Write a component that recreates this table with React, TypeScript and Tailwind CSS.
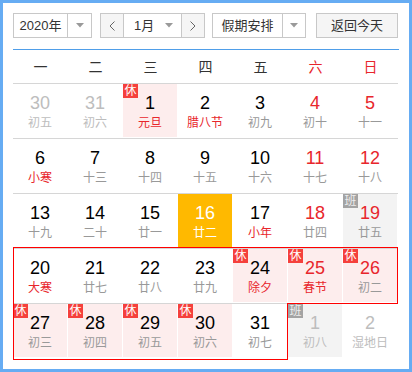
import React from "react";

type Cell = {
  d: number;
  l: string;
  dRed?: boolean;
  lRed?: boolean;
  other?: boolean;
  badge?: "休" | "班";
  bg?: "pink" | "gray" | "today";
};

const rows: Cell[][] = [
  [
    { d: 30, l: "初五", other: true },
    { d: 31, l: "初六", other: true },
    { d: 1, l: "元旦", lRed: true, badge: "休", bg: "pink" },
    { d: 2, l: "腊八节", lRed: true },
    { d: 3, l: "初九" },
    { d: 4, l: "初十", dRed: true },
    { d: 5, l: "十一", dRed: true },
  ],
  [
    { d: 6, l: "小寒", lRed: true },
    { d: 7, l: "十三" },
    { d: 8, l: "十四" },
    { d: 9, l: "十五" },
    { d: 10, l: "十六" },
    { d: 11, l: "十七", dRed: true },
    { d: 12, l: "十八", dRed: true },
  ],
  [
    { d: 13, l: "十九" },
    { d: 14, l: "二十" },
    { d: 15, l: "廿一" },
    { d: 16, l: "廿二", bg: "today" },
    { d: 17, l: "小年", lRed: true },
    { d: 18, l: "廿四", dRed: true },
    { d: 19, l: "廿五", dRed: true, badge: "班", bg: "gray" },
  ],
  [
    { d: 20, l: "大寒", lRed: true },
    { d: 21, l: "廿七" },
    { d: 22, l: "廿八" },
    { d: 23, l: "廿九" },
    { d: 24, l: "除夕", lRed: true, badge: "休", bg: "pink" },
    { d: 25, l: "春节", dRed: true, lRed: true, badge: "休", bg: "pink" },
    { d: 26, l: "初二", dRed: true, badge: "休", bg: "pink" },
  ],
  [
    { d: 27, l: "初三", badge: "休", bg: "pink" },
    { d: 28, l: "初四", badge: "休", bg: "pink" },
    { d: 29, l: "初五", badge: "休", bg: "pink" },
    { d: 30, l: "初六", badge: "休", bg: "pink" },
    { d: 31, l: "初七" },
    { d: 1, l: "初八", other: true, badge: "班", bg: "gray" },
    { d: 2, l: "湿地日", other: true },
  ],
];

const weekdays = ["一", "二", "三", "四", "五", "六", "日"];

function Caret() {
  return (
    <svg width="8" height="5" viewBox="0 0 8 5">
      <path d="M0 0 L8 0 L4 4.5 Z" fill="#9a9a9a" />
    </svg>
  );
}

function DayCell({ c }: { c: Cell }) {
  const bgClass =
    c.bg === "pink"
      ? "bg-[#fdeded]"
      : c.bg === "gray"
      ? "bg-[#f3f3f3]"
      : c.bg === "today"
      ? "bg-[#ffb900]"
      : "bg-white";
  let dColor = "text-black";
  let lColor = "text-[#999999]";
  if (c.other) {
    dColor = "text-[#bdbdbd]";
    lColor = "text-[#bdbdbd]";
  } else if (c.bg === "today") {
    dColor = "text-white";
    lColor = "text-white";
  } else {
    if (c.dRed) dColor = "text-[#e8262c]";
    if (c.lRed) lColor = "text-[#e8262c]";
  }
  return (
    <div className="h-[54px] w-[55px] pr-[1px] pb-[1px]">
      <div className={`relative flex h-full w-full flex-col items-center pt-[9px] ${bgClass}`}>
        {c.badge === "休" && (
          <span className="absolute left-0 top-0 flex h-[14px] w-[15px] items-center justify-center bg-[#f5403c] text-[12px] leading-[14px] text-white">
            休
          </span>
        )}
        {c.badge === "班" && (
          <span className="absolute left-0 top-0 flex h-[14px] w-[15px] items-center justify-center bg-[#a3a3a3] text-[12px] leading-[14px] text-[#eeeeee]">
            班
          </span>
        )}
        <span className={`text-[18px] leading-[20px] ${dColor}`}>{c.d}</span>
        <span className={`mt-[2px] text-[12px] leading-[16px] ${lColor}`}>{c.l}</span>
      </div>
    </div>
  );
}

export default function App() {
  return (
    <div
      className="h-[372px] w-[412px] border-[3px] border-[#66acf3] bg-white px-[10px] pt-[10px]"
      style={{ fontFamily: '"Liberation Sans", "Noto Sans CJK SC", sans-serif' }}
    >
      {/* header controls */}
      <div className="flex h-[25px] items-stretch text-[13px] text-[#333333]">
        <div className="flex w-[79px] border border-[#c8c8c8] bg-white">
          <div className="flex flex-1 items-center justify-center leading-none">2020年</div>
          <div className="flex w-[24px] items-center justify-center border-l border-[#c8c8c8]">
            <Caret />
          </div>
        </div>
        <div className="ml-[8px] flex w-[105px] border border-[#c8c8c8]">
          <div className="flex w-[22px] items-center justify-center bg-[#f5f5f5]">
            <svg width="6" height="10" viewBox="0 0 6 10">
              <path d="M5.5 0.5 L1 5 L5.5 9.5" fill="none" stroke="#666666" strokeWidth="1" />
            </svg>
          </div>
          <div className="flex flex-1 items-center border-l border-r border-[#c8c8c8] bg-white pl-[10px] pr-[8px]">
            <span className="flex-1 leading-none">1月</span>
            <Caret />
          </div>
          <div className="flex w-[22px] items-center justify-center bg-[#f5f5f5]">
            <svg width="6" height="10" viewBox="0 0 6 10">
              <path d="M0.5 0.5 L5 5 L0.5 9.5" fill="none" stroke="#666666" strokeWidth="1" />
            </svg>
          </div>
        </div>
        <div className="ml-[7px] flex w-[94px] border border-[#c8c8c8] bg-white">
          <div className="flex flex-1 items-center justify-center leading-none">假期安排</div>
          <div className="flex w-[23px] items-center justify-center border-l border-[#c8c8c8]">
            <Caret />
          </div>
        </div>
        <div className="ml-[10px] flex w-[82px] items-center justify-center border border-[#c8c8c8] bg-[#f5f5f5] leading-none">
          返回今天
        </div>
      </div>

      {/* blue divider */}
      <div className="mt-[11px] h-[1px] bg-[#4f9ee9]" />

      {/* weekday header */}
      <div className="flex h-[33px] items-center text-[14px]">
        {weekdays.map((w, i) => (
          <div
            key={w}
            className={`w-[55px] text-center leading-none ${i >= 5 ? "text-[#e8262c]" : "text-[#333333]"}`}
          >
            {w}
          </div>
        ))}
      </div>

      {/* grid */}
      <div className="relative w-[385px]">
        {rows.map((r, ri) => (
          <div key={ri} className="flex h-[55px] border-t border-[#d6d6d6]">
            {r.map((c, ci) => (
              <DayCell key={ci} c={c} />
            ))}
          </div>
        ))}
        {/* holiday range outline */}
        <div className="pointer-events-none absolute left-0 top-[164px] h-[57px] w-[385px] border-l border-r border-t border-[#ff0000]" />
        <div className="pointer-events-none absolute left-[274px] top-[220px] h-[1px] w-[111px] bg-[#ff0000]" />
        <div className="pointer-events-none absolute left-0 top-[220px] h-[57px] w-[275px] border-b border-l border-r border-[#ff0000]" />
      </div>
    </div>
  );
}
